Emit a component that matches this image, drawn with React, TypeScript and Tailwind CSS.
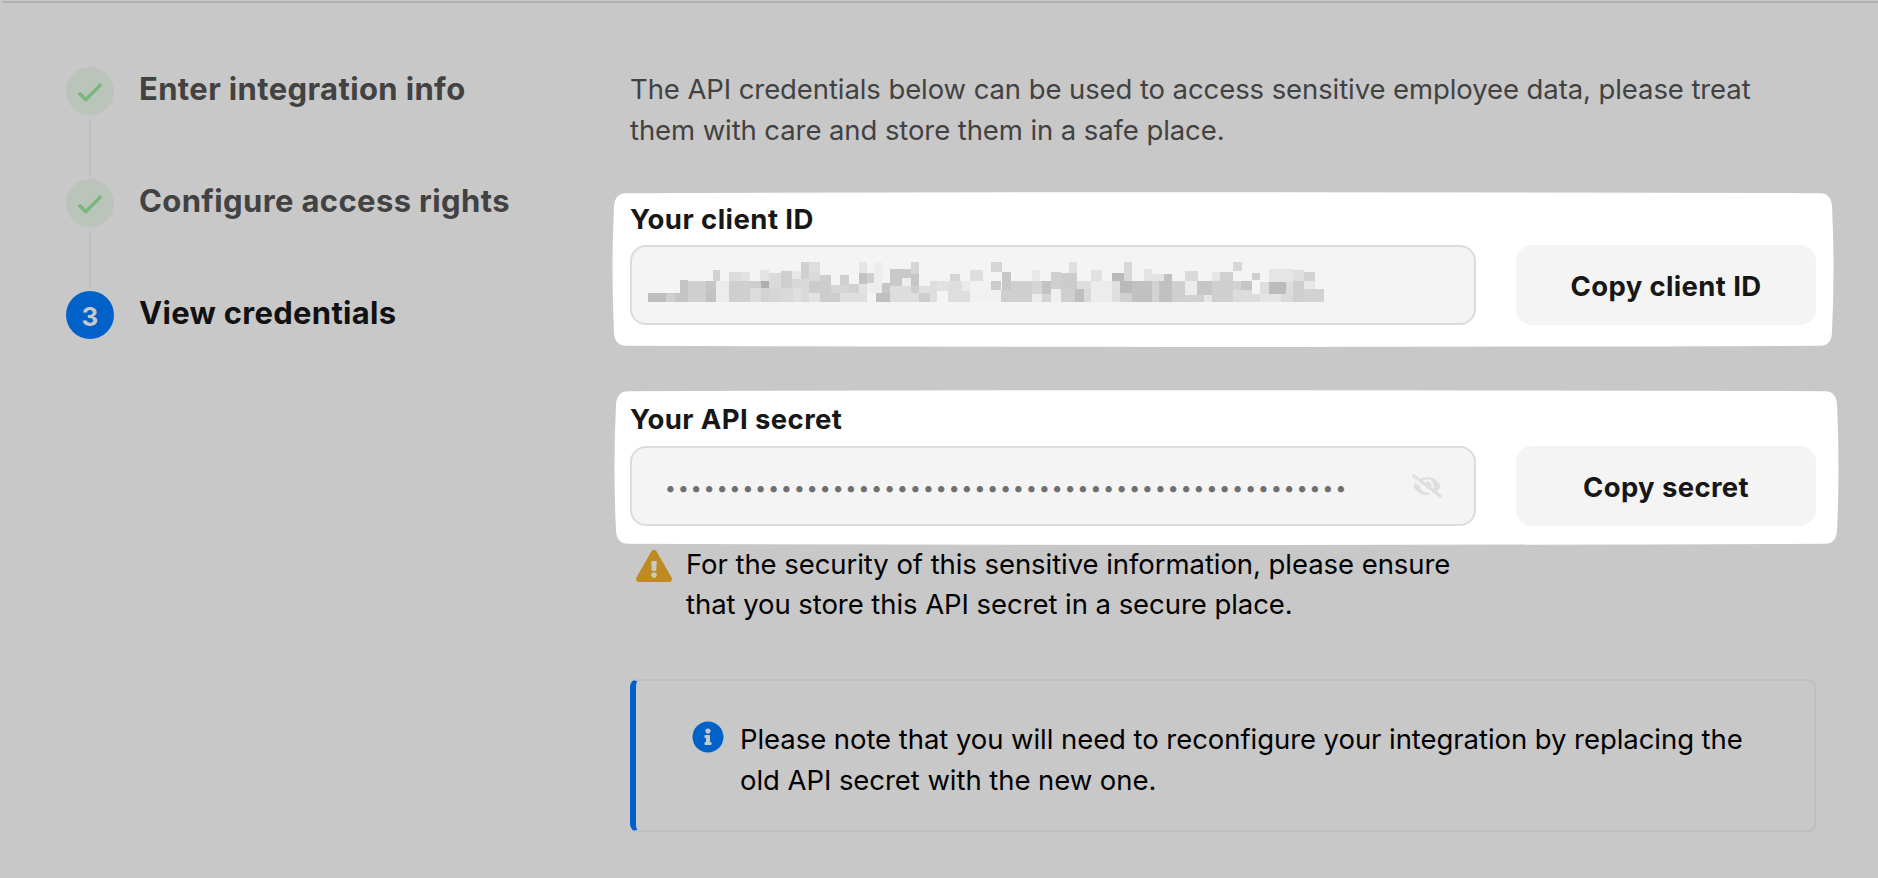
import { FaExclamationTriangle, FaEyeSlash, FaInfoCircle } from 'react-icons/fa';

const steps = [
  { label: 'Enter integration info', done: true },
  { label: 'Configure access rights', done: true },
  { label: 'View credentials', done: false },
];

// [x, y, width, height, grey] blocks of the censored client ID
const mosaic: [number, number, number, number, string][] = [
  [0, 31, 18, 9, '#bebebe'], [18, 31, 9, 9, '#cfcfcf'], [27, 31, 13, 9, '#c5c5c5'],
  [32, 18, 8, 13, '#c4c4c4'], [40, 19, 18, 21, '#cfcfcf'], [58, 19, 10, 9, '#c6c6c6'], [58, 28, 10, 12, '#c2c2c2'],
  [65, 8, 7, 11, '#d2d2d2'], [68, 19, 13, 21, '#ececec'],
  [81, 10, 12, 9, '#dcdcdc'], [93, 10, 9, 9, '#e2e2e2'], [81, 19, 21, 21, '#cfcfcf'],
  [102, 19, 11, 7, '#cdcdcd'], [102, 26, 11, 14, '#dcdcdc'], [112, 8, 9, 11, '#e3e3e3'],
  [113, 19, 8, 7, '#adadad'], [113, 26, 8, 14, '#d2d2d2'],
  [121, 11, 12, 15, '#dadada'], [121, 26, 12, 14, '#d6d6d6'],
  [133, 9, 11, 17, '#cfcfcf'], [133, 26, 12, 14, '#d9d9d9'],
  [144, 9, 9, 8, '#e8e8e8'], [144, 17, 9, 9, '#d8d8d8'], [145, 26, 8, 14, '#dfdfdf'],
  [153, 0, 8, 17, '#d0d0d0'], [161, 0, 11, 10, '#dedede'], [161, 10, 11, 9, '#dadada'],
  [153, 17, 8, 23, '#dadada'], [161, 19, 11, 12, '#cccccc'], [161, 31, 11, 9, '#e2e2e2'],
  [172, 13, 11, 27, '#cdcdcd'], [183, 23, 18, 8, '#d6d6d6'], [183, 31, 9, 9, '#cdcdcd'],
  [192, 13, 9, 10, '#cfcfcf'], [192, 31, 27, 9, '#dfdfdf'], [201, 22, 10, 9, '#d1d1d1'],
  [211, 0, 8, 11, '#e4e4e4'], [211, 11, 8, 11, '#c3c3c3'], [219, 11, 7, 10, '#cecece'], [211, 22, 8, 9, '#e2e2e2'],
  [219, 21, 7, 10, '#eeeeee'], [226, 0, 8, 31, '#ededed'],
  [228, 31, 14, 9, '#bfbfbf'], [234, 21, 8, 10, '#c6c6c6'],
  [242, 7, 21, 9, '#c9c9c9'], [242, 16, 12, 8, '#c9c9c9'], [254, 16, 9, 8, '#eeeeee'], [242, 24, 29, 16, '#dddddd'],
  [263, 0, 8, 12, '#d5d5d5'], [263, 12, 8, 12, '#c6c6c6'], [263, 24, 8, 7, '#cdcdcd'],
  [271, 24, 11, 7, '#dfdfdf'], [271, 31, 11, 9, '#cdcdcd'], [282, 19, 7, 21, '#dedede'],
  [289, 19, 11, 10, '#e2e2e2'], [300, 19, 14, 21, '#dedede'], [302, 12, 10, 7, '#d5d5d5'],
  [314, 19, 8, 10, '#ebebeb'], [314, 29, 8, 11, '#dedede'], [322, 8, 13, 11, '#dedede'], [322, 19, 31, 21, '#f1f1f1'],
  [343, 0, 11, 10, '#d5d5d5'], [343, 19, 10, 9, '#cbcbcb'], [354, 10, 9, 18, '#c7c7c7'],
  [353, 28, 10, 12, '#cfcfcf'], [363, 19, 21, 21, '#cfcfcf'], [384, 8, 8, 11, '#e9e9e9'],
  [384, 19, 10, 13, '#d5d5d5'], [394, 19, 9, 13, '#c3c3c3'], [384, 32, 10, 8, '#ebebeb'], [394, 32, 9, 8, '#d4d4d4'],
  [403, 10, 10, 17, '#cfcfcf'], [413, 11, 16, 16, '#cccccc'], [403, 27, 10, 13, '#f0f0f0'], [413, 27, 14, 13, '#cfcfcf'],
  [421, 0, 8, 11, '#dfdfdf'], [427, 27, 9, 13, '#bfbfbf'], [429, 19, 14, 8, '#dedede'], [436, 27, 7, 13, '#dadada'],
  [443, 8, 11, 11, '#e1e1e1'], [443, 19, 21, 21, '#ececec'], [464, 11, 12, 8, '#bababa'], [464, 19, 8, 21, '#dfdfdf'],
  [472, 19, 12, 12, '#bababa'], [472, 31, 12, 9, '#d0d0d0'], [476, 0, 8, 19, '#d8d8d8'], [484, 19, 20, 21, '#c1c1c1'],
  [496, 7, 8, 12, '#e3e3e3'], [504, 12, 12, 7, '#e3e3e3'], [504, 19, 7, 21, '#d2d2d2'], [511, 19, 13, 21, '#c1c1c1'],
  [516, 12, 8, 7, '#c1c1c1'], [524, 19, 13, 21, '#cfcfcf'], [537, 9, 13, 10, '#dadada'], [537, 19, 12, 14, '#ececec'],
  [537, 33, 19, 7, '#d0d0d0'], [549, 19, 15, 14, '#c6c6c6'], [556, 33, 8, 7, '#e6e6e6'],
  [564, 10, 8, 9, '#e5e5e5'], [572, 10, 13, 9, '#d0d0d0'], [564, 19, 21, 21, '#cfcfcf'],
  [585, 0, 9, 9, '#d7d7d7'], [585, 19, 8, 9, '#d3d3d3'], [593, 19, 11, 9, '#c6c6c6'], [585, 28, 19, 12, '#dcdcdc'],
  [604, 11, 8, 7, '#cecece'], [604, 32, 8, 8, '#dcdcdc'], [612, 20, 9, 12, '#dedede'], [612, 32, 21, 8, '#e4e4e4'],
  [621, 7, 24, 13, '#e6e6e6'], [621, 20, 17, 12, '#bbbbbb'], [638, 20, 7, 12, '#dcdcdc'], [633, 32, 12, 8, '#dadada'],
  [645, 8, 11, 11, '#dfdfdf'], [645, 19, 11, 21, '#cfcfcf'], [656, 10, 11, 9, '#d3d3d3'], [656, 19, 11, 8, '#e8e8e8'],
  [656, 27, 20, 13, '#d2d2d2'],
];

function Stepper() {
  return (
    <ol className="flex w-[564px] flex-col">
      {steps.map((step, i) => (
        <li key={step.label} className="flex h-28 gap-[25px]">
          <div className="flex w-12 flex-col items-center gap-1">
            {step.done ? (
              <span className="flex size-12 shrink-0 items-center justify-center rounded-full bg-[#bac4ba]">
                <svg viewBox="0 0 48 48" className="size-12" fill="none" stroke="#76b77b" strokeWidth="3.4">
                  <path d="M13 26 L19.700 32.700 L35 17.400" />
                </svg>
              </span>
            ) : (
              <span className="flex size-12 shrink-0 items-center justify-center rounded-full bg-[#0062c8] pt-[3px] text-[26px] font-bold text-[#c8c8c8]">
                {i + 1}
              </span>
            )}
            {i < steps.length - 1 && <span className="h-14 w-0.5 bg-[#bfbfbf]" />}
          </div>
          <span
            className={
              step.done
                ? 'text-[31px] leading-[44px] font-bold tracking-[0.37px] whitespace-nowrap text-[#424242]'
                : 'text-[31px] leading-[44px] font-bold tracking-[0.3px] whitespace-nowrap text-[#111111]'
            }
          >
            {step.label}
          </span>
        </li>
      ))}
    </ol>
  );
}

// White spotlight with slightly bowed edges, sits behind a credential row
function Spotlight({ className }: { className: string }) {
  return (
    <svg className={className} viewBox="0 0 1221 155" preserveAspectRatio="none" fill="#fff">
      <path d="M14 1.2 Q610 -0.8 1207 1.2 Q1218 1.2 1219 14 Q1222 77 1219 141 Q1218 153.800 1207 153.800 Q610 156 14 153.800 Q3 153.800 2 141 Q-1 77 2 14 Q3 1.200 14 1.200Z" />
    </svg>
  );
}

export default function App() {
  return (
    <div className="h-[878px] w-[1878px] overflow-hidden bg-[#c8c8c8] pt-px font-['Inter',sans-serif]">
      <div className="ml-0.5 h-0.5 bg-[#afafaf]" />
      <div className="flex pt-16 pl-[66px]">
        <Stepper />

        <div className="w-[1186px]">
          <p className="mt-0.5 h-[98px] text-[27.5px] leading-[41px] tracking-[-0.09px] whitespace-nowrap text-[#424242]">
            The API credentials below can be used to access sensitive employee data, please treat
            <br />
            them with care and store them in a safe place.
          </p>

          <section className="relative mt-[34px] h-[200px]">
            <Spotlight className="absolute -top-[9px] -left-[18px] h-[155px] w-[1222px]" />
            <div className="relative">
              <h2 className="h-11 text-[27.5px] leading-[36px] font-bold tracking-[0.45px] text-[#171717]">
                Your client ID
              </h2>
              <div className="flex gap-10">
                <div className="h-20 w-[846px] rounded-2xl border-2 border-[#dcdcdc] bg-[#f4f4f4] pt-[15px] pl-4">
                  <svg width="676" height="40" shapeRendering="crispEdges">
                    {mosaic.map(([x, y, w, h, fill]) => (
                      <rect key={`${x}-${y}`} x={x} y={y} width={w} height={h} fill={fill} />
                    ))}
                  </svg>
                </div>
                <button className="h-20 w-[300px] rounded-2xl bg-[#f4f4f4] pt-1 text-[27.5px] font-bold tracking-[0.36px] text-[#171717]">
                  Copy client ID
                </button>
              </div>
            </div>
          </section>

          <section className="relative h-[146px]">
            <Spotlight className="absolute -top-[11px] -left-[16px] h-[155px] w-[1225px]" />
            <div className="relative">
              <h2 className="h-[45px] text-[27.5px] leading-[36px] font-bold tracking-[0.4px] text-[#171717]">
                Your API secret
              </h2>
              <div className="flex gap-10">
                <div className="flex h-20 w-[846px] items-center justify-between rounded-2xl border-2 border-[#dcdcdc] bg-[#f4f4f4] pr-8 pl-8">
                  <span className="flex pt-[3px] text-[20px] text-[#6f6f6f]">
                    {Array.from({ length: 53 }, (_, i) => (
                      <span key={i} className="w-[12.9px] text-center">
                        •
                      </span>
                    ))}
                  </span>
                  <FaEyeSlash className="h-6 w-[30px] text-[#dedede]" />
                </div>
                <button className="h-20 w-[300px] rounded-2xl bg-[#f4f4f4] pt-1 text-[27.5px] font-bold tracking-[0.36px] text-[#171717]">
                  Copy secret
                </button>
              </div>
            </div>
          </section>

          <div className="flex h-[132px] gap-[14px] pl-1.5">
            <FaExclamationTriangle className="mt-[3px] h-8 w-9 text-[#be8a21]" />
            <p className="-mt-[3px] text-[27.5px] leading-10 tracking-[-0.06px] whitespace-nowrap text-black">
              For the security of this sensitive information, please ensure
              <br />
              that you store this API secret in a secure place.
            </p>
          </div>

          <div className="flex h-[153px] gap-4 rounded-lg border-2 border-l-[6px] border-[#bfbfbf] border-l-[#0062c8] pt-[38px] pl-14">
            <FaInfoCircle className="mt-0.5 size-8 text-[#0062c8]" />
            <p className="text-[27.5px] leading-[41px] tracking-[-0.06px] whitespace-nowrap text-black">
              Please note that you will need to reconfigure your integration by replacing the
              <br />
              old API secret with the new one.
            </p>
          </div>
        </div>
      </div>
    </div>
  );
}
